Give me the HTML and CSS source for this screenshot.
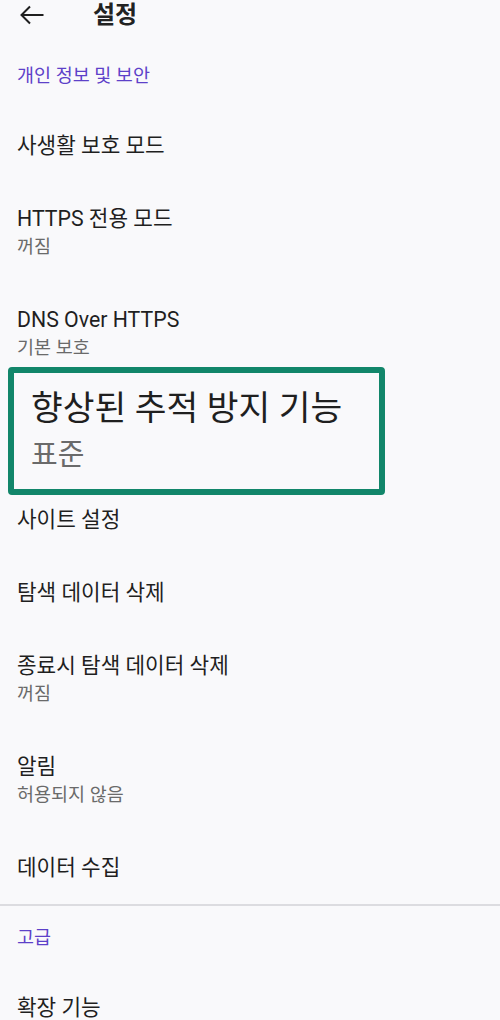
FILE: index.html
```
<!doctype html>
<html lang="ko">

<head>
	<meta charset="UTF-8">
	<title>설정</title>
	<link rel="stylesheet" href="styles.css">
</head>

<body>
	<div class="toolbar">
		<svg class="back" width="24" height="20" viewBox="0 0 24 20">
			<path d="M1.5 10H23.5M10 1.5L1.5 10L10 18.5" fill="none" stroke="#1f1f1f" stroke-width="2" />
		</svg>
		<h1 class="toolbar_title">설정</h1>
	</div>

	<div class="section_head">개인 정보 및 보안</div>
	<div class="pref one"><div class="pref_title">사생활 보호 모드</div></div>
	<div class="pref two">
		<div class="pref_title">HTTPS 전용 모드</div>
		<div class="pref_sub">꺼짐</div>
	</div>
	<div class="pref two">
		<div class="pref_title">DNS Over HTTPS</div>
		<div class="pref_sub">기본 보호</div>
	</div>
	<!-- 강조된 항목: 원래 자리 위에 확대해서 덮음 -->
	<div class="pref_slot">
		<div class="highlight">
			<div class="hl_title">향상된 추적 방지 기능</div>
			<div class="hl_sub">표준</div>
		</div>
	</div>
	<div class="pref one"><div class="pref_title">사이트 설정</div></div>
	<div class="pref one"><div class="pref_title">탐색 데이터 삭제</div></div>
	<div class="pref two">
		<div class="pref_title">종료시 탐색 데이터 삭제</div>
		<div class="pref_sub">꺼짐</div>
	</div>
	<div class="pref two">
		<div class="pref_title">알림</div>
		<div class="pref_sub">허용되지 않음</div>
	</div>
	<div class="pref one"><div class="pref_title">데이터 수집</div></div>

	<div class="divider"></div>

	<div class="section_head">고급</div>
	<div class="pref one"><div class="pref_title">확장 기능</div></div>
</body>

</html>
```

FILE: styles.css
```
body {
	margin: 0;
	background: #f9f9fb;
	font-family: Roboto, "Noto Sans CJK KR", sans-serif;
	color: #1f1f1f;
	overflow: hidden;
}

.toolbar {
	display: flex;
	align-items: center;
	height: 30px;
	margin-bottom: 14px;
}

.back {
	margin-left: 20px;
}

.toolbar_title {
	margin: 0 0 0 49px;
	font-size: 24px;
	font-weight: 700;
	line-height: 30px;
	color: #222;
}

.section_head {
	height: 65px;
	padding-left: 17px;
	font-size: 18.5px;
	line-height: 65px;
	color: #5d41c9;
	box-sizing: border-box;
}

.pref {
	padding-left: 17px;
	box-sizing: border-box;
	display: flex;
	flex-direction: column;
	justify-content: center;
}

.one {
	height: 73px;
}

.two {
	height: 101px;
}

.pref_title {
	font-size: 21.3px;
	line-height: 28px;
}

.pref_sub {
	font-size: 18.5px;
	line-height: 28px;
	color: #6a6a6a;
}

.pref_slot {
	position: relative;
	height: 99px;
}

.highlight {
	position: absolute;
	left: 8px;
	top: -17px;
	width: 377px;
	height: 128px;
	box-sizing: border-box;
	border: 6px solid #12866a;
	border-radius: 4px;
	background: #f9f9fb;
	padding: 12px 0 0 17px;
}

.hl_title {
	font-size: 34.5px;
	line-height: 47px;
}

.hl_sub {
	font-size: 29px;
	line-height: 47px;
	color: #6a6a6a;
}

.divider {
	height: 2px;
	background: #dcdce0;
}
```
